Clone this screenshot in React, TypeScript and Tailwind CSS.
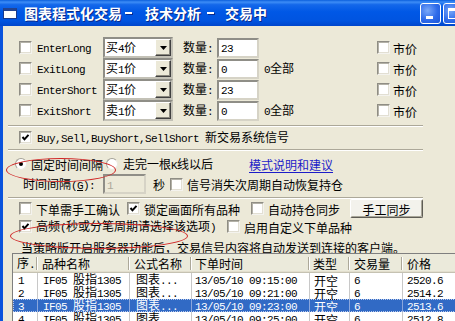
import React from "react";

const CJKRE = /([\u2E80-\u9FFF\uFF00-\uFFEF\u3000-\u303F]+)/;
const ISCJK = /[\u2E80-\u9FFF\uFF00-\uFFEF\u3000-\u303F]/;

function Tx({ t }: { t: string }) {
  const parts = t.split(CJKRE).filter((p) => p !== "");
  return (
    <>
      {parts.map((p, i) =>
        ISCJK.test(p) ? (
          <span key={i} className="font-['Noto_Sans_CJK_SC',sans-serif] text-[12px]">
            {p}
          </span>
        ) : (
          <span key={i} className="font-['Liberation_Mono',monospace] text-[11px] tracking-[-0.6px]">
            {p}
          </span>
        )
      )}
    </>
  );
}

function L({ t, className = "" }: { t: string; className?: string }) {
  return (
    <span className={`whitespace-pre leading-[13px] text-black ${className}`}>
      <Tx t={t} />
    </span>
  );
}

function Cb({ checked = false }: { checked?: boolean }) {
  return (
    <span className="relative inline-flex items-center justify-center w-[13px] h-[13px] shrink-0 bg-white border border-t-[#8f8d84] border-l-[#8f8d84] border-b-[#f4f3ee] border-r-[#f4f3ee] shadow-[inset_1px_1px_0_#b3b1a7,inset_-1px_-1px_0_#e2dfd3]">
      {checked && (
        <svg width="9" height="9" viewBox="0 0 9 9">
          <polyline points="1.5,4 3.5,6.3 7.5,1.8" fill="none" stroke="#000" strokeWidth="2" />
        </svg>
      )}
    </span>
  );
}

function Radio({ checked = false }: { checked?: boolean }) {
  return (
    <span className="inline-flex items-center justify-center w-[12px] h-[12px] shrink-0 rounded-full bg-white border border-t-[#a3a197] border-l-[#a3a197] border-b-[#eceae2] border-r-[#eceae2]">
      {checked && <span className="w-[4px] h-[4px] rounded-full bg-black" />}
    </span>
  );
}

function Sel({ v }: { v: string }) {
  return (
    <div className="flex w-[70px] h-[21px] shrink-0 bg-white border-2 border-t-[#8f8e87] border-l-[#8f8e87] border-b-[#c3c1b6] border-r-[#c3c1b6]">
      <div className="flex-1 flex items-center pl-[1px]">
        <L t={v} />
      </div>
      <div className="w-[16px] h-full flex items-center justify-center bg-[#ECE9D8] border border-t-white border-l-white border-b-[#404040] border-r-[#404040] shadow-[inset_-1px_-1px_0_#8a887e]">
        <svg width="7" height="4" viewBox="0 0 7 4">
          <polygon points="0,0 7,0 3.5,4" fill="#000" />
        </svg>
      </div>
    </div>
  );
}

function Inp({ v, disabled = false, w = "w-[42px]" }: { v: string; disabled?: boolean; w?: string }) {
  return (
    <div
      className={`flex items-center h-[20px] shrink-0 pl-[2px] border-2 border-t-[#8f8e87] border-l-[#8f8e87] border-b-[#d6d3c6] border-r-[#d6d3c6] ${w} ${
        disabled ? "bg-[#ECE9D8] text-[#ACA899]" : "bg-white"
      }`}
    >
      <span className={`whitespace-pre leading-[13px] ${disabled ? "text-[#ACA899]" : "text-black"}`}>
        <Tx t={v} />
      </span>
    </div>
  );
}

function Sep() {
  return <div className="ml-[5px] w-[415px] h-[2px] border-t border-t-[#ACA899] border-b border-b-white" />;
}

const orders = [
  { name: "EnterLong", sel: "买4价", qty: "23", all: "", h: "h-[23px]" },
  { name: "ExitLong", sel: "买1价", qty: "0", all: "0全部", h: "h-[23px]" },
  { name: "EnterShort", sel: "买1价", qty: "23", all: "", h: "h-[22px]" },
  { name: "ExitShort", sel: "卖1价", qty: "0", all: "0全部", h: "h-[22px]" },
];

const colW = ["w-[25px]", "w-[92px]", "w-[62px]", "w-[118px]", "w-[40px]", "w-[53px]", "w-[120px]"];
const headPad = ["pl-[4px]", "pl-[4px]", "pl-[4px]", "pl-[3px]", "pl-[3px]", "pl-[4px]", "pl-[4px]"];
const cellPad = ["pl-[5px]", "pl-[5px]", "pl-[6px]", "pl-[3px]", "pl-[4px]", "pl-[4px]", "pl-[4px]"];
const heads = ["序.", "品种名称", "公式名称", "下单时间", "类型", "交易量", "价格"];
const rows = [
  ["1", "IF05 股指1305", "图表...", "13/05/10 09:15:00", "开空", "6", "2520.6"],
  ["2", "IF05 股指1305", "图表...", "13/05/10 09:21:00", "开空", "6", "2514.2"],
  ["3", "IF05 股指1305", "图表...", "13/05/10 09:23:00", "开空", "6", "2513.6"],
  ["4", "IF05 股指1305", "图表...", "13/05/10 09:25:00", "开空", "6", "2512.8"],
];

export default function App() {
  return (
    <div className="relative w-[455px] h-[321px] overflow-hidden bg-[#ECE9D8] font-['Noto_Sans_CJK_SC',sans-serif]">
      {/* Title bar */}
      <div className="flex items-center h-[26px] bg-[linear-gradient(to_bottom,#0B5FDC_0%,#3D8DF6_8%,#1468EA_18%,#0058E6_45%,#0054E0_80%,#0046CC_100%)]">
        <div className="ml-[3px] w-[14px] h-[11px] bg-white border border-[#1a3a8c] border-t-[3px] border-t-[#24438f]" />
        <div className="ml-[7px] flex items-center text-white font-bold text-[14px] leading-[16px] [text-shadow:1px_1px_0_#0a2a8a] whitespace-pre">
          <span>图表程式化交易</span>
          <span className="ml-[3px] w-[7px] h-[2px] bg-white shadow-[1px_1px_0_#0a2a8a]" />
          <span className="ml-[13px]">技术分析</span>
          <span className="ml-[6px] w-[7px] h-[2px] bg-white shadow-[1px_1px_0_#0a2a8a]" />
          <span className="ml-[11px]">交易中</span>
        </div>
        <div className="flex-1" />
        <div className="flex gap-[2px] mr-[-9px]">
          <div className="relative w-[21px] h-[21px] rounded-[3px] border border-white bg-[radial-gradient(circle_at_35%_35%,#7AA8F8_0%,#2E6BEA_55%,#1A55D8_100%)] flex items-end pl-[5px] pb-[4px]">
            <span className="w-[7px] h-[3px] bg-white" />
          </div>
          <div className="relative w-[21px] h-[21px] rounded-[3px] border border-white bg-[radial-gradient(circle_at_35%_35%,#7AA8F8_0%,#2E6BEA_55%,#1A55D8_100%)] pl-[4px] pt-[4px]">
            <div className="w-[11px] h-[11px] border border-white border-t-[3px]" />
          </div>
        </div>
      </div>

      <div className="flex h-[295px]">
        <div className="w-[3px] bg-[#0A53DD] shrink-0" />
        <div className="flex-1 flex flex-col pt-[11px] min-w-0">
          {orders.map((o) => (
            <div key={o.name} className={`flex items-center pl-[16px] ${o.h}`}>
              <Cb />
              <L t={o.name} className="ml-[5px] w-[66px]" />
              <Sel v={o.sel} />
              <L t="数量:" className="ml-[10px] w-[34px]" />
              <Inp v={o.qty} />
              <L t={o.all} className="ml-[5px] w-[113px]" />
              <Cb />
              <L t="市价" className="ml-[3px]" />
            </div>
          ))}

          <div className="mt-[4px]">
            <Sep />
          </div>

          <div className="mt-[4px] flex items-center h-[13px] pl-[16px]">
            <Cb checked />
            <L t="Buy,Sell,BuyShort,SellShort 新交易系统信号" className="ml-[5px]" />
          </div>

          <div className="mt-[5px]">
            <Sep />
          </div>

          <div className="mt-[6px] flex items-center h-[14px] pl-[12px]">
            <Radio checked />
            <L t="固定时间间隔" className="ml-[4px] w-[75px]" />
            <Radio />
            <L t="走完一根K线以后" className="ml-[5px] w-[126px]" />
            <span className="whitespace-pre leading-[13px] text-[#1c1cc8] underline underline-offset-2">
              <Tx t="模式说明和建议" />
            </span>
          </div>

          <div className="mt-[3px] flex items-center h-[20px] pl-[20px]">
            <span className="whitespace-pre leading-[13px] text-black w-[80px]">
              <Tx t="时间间隔(" />
              <span className="underline">
                <Tx t="G" />
              </span>
              <Tx t="):" />
            </span>
            <Inp v="1" disabled w="w-[43px]" />
            <L t="秒" className="ml-[7px]" />
            <span className="ml-[5px] flex">
              <Cb />
            </span>
            <L t="信号消失次周期自动恢复持仓" className="ml-[4px]" />
          </div>

          <div className="mt-[3px]">
            <Sep />
          </div>

          <div className="flex items-center h-[19px] pl-[16px]">
            <div className="flex items-center w-[108px]">
              <Cb />
              <L t="下单需手工确认" className="ml-[4px]" />
            </div>
            <div className="flex items-center w-[124px]">
              <Cb checked />
              <L t="锁定画面所有品种" className="ml-[4px]" />
            </div>
            <div className="flex items-center w-[99px]">
              <Cb />
              <L t="自动持仓同步" className="ml-[4px]" />
            </div>
            <div className="w-[73px] h-[19px] flex items-center justify-center bg-[#F3F2EC] border border-t-white border-l-white border-b-[#5e5c55] border-r-[#5e5c55] shadow-[inset_-1px_-1px_0_#a8a699] rounded-[2px]">
              <L t="手工同步" />
            </div>
          </div>

          <div className="mt-[2px] flex items-center h-[13px] pl-[16px]">
            <div className="flex items-center w-[208px]">
              <Cb checked />
              <L t="高频(秒或分笔周期请选择该选项)" className="ml-[4px]" />
            </div>
            <div className="flex items-center">
              <Cb />
              <L t="启用自定义下单品种" className="ml-[4px]" />
            </div>
          </div>

          <div className="mt-[7px] flex items-center h-[13px] pl-[18px]">
            <L t="当策略版开启服务器功能后，交易信号内容将自动发送到连接的客户端。" />
          </div>

          {/* List */}
          <div className="ml-[9px] w-[470px] flex-1 bg-white border-t border-l border-[#7f7f7f]">
            <div className="flex h-[19px] bg-[#EBEADB] border-b border-b-[#c5c2b2] shadow-[inset_0_-1px_0_#e2decd]">
              {heads.map((h, i) => (
                <div key={i} className={`flex items-center shrink-0 ${colW[i]}`}>
                  <L t={h} className={`flex-1 ${headPad[i]}`} />
                  <span className="w-[1px] h-[13px] bg-[#ACA899]" />
                  <span className="w-[1px] h-[13px] bg-white" />
                </div>
              ))}
            </div>
            {rows.map((r, ri) => {
              const sel = ri === 2;
              return (
                <div
                  key={ri}
                  className={`flex h-[13px] ${
                    sel ? "bg-[#316AC5] outline outline-1 outline-dotted outline-[#b9c9ea] -outline-offset-1" : ""
                  }`}
                >
                  {r.map((c, ci) => (
                    <div
                      key={ci}
                      className={`flex items-center shrink-0 border-r ${colW[ci]} ${cellPad[ci]} ${
                        sel ? "border-r-[#8aa6dc]" : "border-r-[#c8c8c8]"
                      }`}
                    >
                      <span className={`whitespace-pre leading-[13px] ${sel ? "text-white" : "text-black"}`}>
                        <Tx t={c} />
                      </span>
                    </div>
                  ))}
                </div>
              );
            })}
          </div>
        </div>
      </div>

      {/* red annotation ellipses */}
      <div className="absolute left-[6px] top-[158px] w-[110px] h-[24px] rounded-[50%] border border-[#d02828] pointer-events-none" />
      <div className="absolute left-[10px] top-[223px] w-[178px] h-[26px] rounded-[50%] border border-[#d02828] pointer-events-none" />
    </div>
  );
}
